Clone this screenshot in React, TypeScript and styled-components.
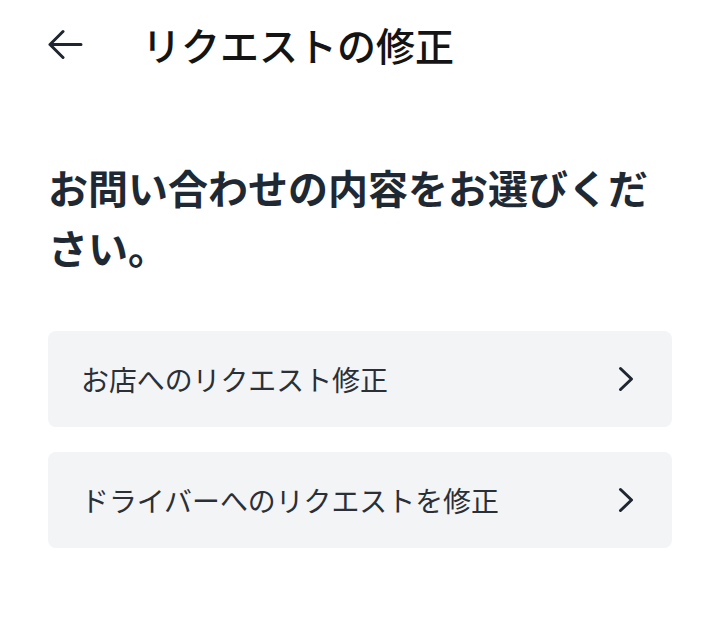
import styled, { createGlobalStyle } from "styled-components";

const GlobalStyle = createGlobalStyle`
    body {
        margin: 0;
        background: #ffffff;
        font-family: "Noto Sans CJK JP", "Noto Sans", sans-serif;
    }
`

const Pagina = styled.div`
    display: flex;
    flex-direction: column;
    padding: 0 48px;
`

const Cabecalho = styled.header`
    display: flex;
    align-items: center;
    height: 88px;
`

const BotaoVoltar = styled.button`
    display: flex;
    align-items: center;
    justify-content: center;
    width: 35px;
    height: 35px;
    padding: 0;
    margin-right: 59px;
    border: none;
    background: none;
`

const TituloPagina = styled.h1`
    margin: 0;
    font-size: 39px;
    font-weight: 500;
    color: #141414;
`

const Pergunta = styled.h2`
    margin: 69px 0 0 0;
    font-size: 40px;
    line-height: 60px;
    font-weight: 700;
    color: #1f2933;
`

const Lista = styled.div`
    display: flex;
    flex-direction: column;
    gap: 25px;
    margin-top: 54px;
`

const Opcao = styled.button`
    display: flex;
    align-items: center;
    justify-content: space-between;
    height: 96px;
    padding: 0 36px 0 33px;
    border: none;
    border-radius: 8px;
    background: #f3f4f6;
    font-family: inherit;
    font-size: 27.9px;
    font-weight: 400;
    color: #2b2f36;
    text-align: left;
`

const SetaVoltar = () => (
    <svg width={35} height={35} viewBox="0 0 35 35" fill="none" stroke="#1f2630" strokeWidth={3} strokeLinecap="round" strokeLinejoin="round">
        <path d="M33 17.5H2M15 4.5 2 17.5l13 13" />
    </svg>
)

const Chevron = () => (
    <svg width={20} height={28} viewBox="0 0 20 28" fill="none" stroke="#1f2630" strokeWidth={3} strokeLinecap="round" strokeLinejoin="round">
        <path d="M4.5 3.5 15.5 14 4.5 24.5" />
    </svg>
)

const opcoes = ["お店へのリクエスト修正", "ドライバーへのリクエストを修正"]

export default function App() {
    return (
        <>
            <GlobalStyle />
            <Pagina>
                <Cabecalho>
                    <BotaoVoltar aria-label="戻る">
                        <SetaVoltar />
                    </BotaoVoltar>
                    <TituloPagina>リクエストの修正</TituloPagina>
                </Cabecalho>
                <Pergunta>お問い合わせの内容をお選びください。</Pergunta>
                <Lista>
                    {opcoes.map(texto => (
                        <Opcao key={texto}>
                            {texto}
                            <Chevron />
                        </Opcao>
                    ))}
                </Lista>
            </Pagina>
        </>
    )
}
